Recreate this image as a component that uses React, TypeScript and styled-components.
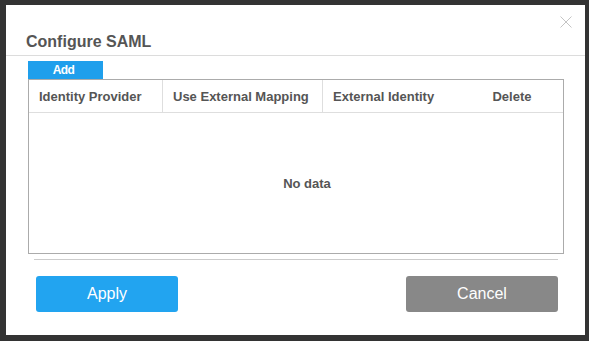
import React from "react"
import styled, { createGlobalStyle } from "styled-components"

const GlobalStyle = createGlobalStyle`
  html, body {
    margin: 0;
    padding: 0;
    background: #333333;
    font-family: "Liberation Sans", Arial, sans-serif;
  }
`

const columns = [
  { title: "Identity Provider", width: 134, align: "left" },
  { title: "Use External Mapping", width: 160, align: "left" },
  { title: "External Identity", width: 138, align: "left", noDivider: true },
  { title: "Delete", width: 102, align: "center", noDivider: true },
]

const App: React.FC = () => {
  return (
    <>
      <GlobalStyle />
      <Page>
        <Modal>
          <Header>
            <Title>Configure SAML</Title>
            <CloseButton aria-label="close">
              <svg width="12" height="12" viewBox="0 0 12 12">
                <path d="M0.5 0.5 L11.5 11.5 M11.5 0.5 L0.5 11.5" stroke="#c4c4c4" strokeWidth="1" fill="none" />
              </svg>
            </CloseButton>
          </Header>

          <Body>
            <AddButton>Add</AddButton>
            <Table>
              <HeadRow>
                {columns.map((col) => (
                  <HeadCell key={col.title} $width={col.width} $align={col.align} $divider={!col.noDivider}>
                    {col.title}
                  </HeadCell>
                ))}
              </HeadRow>
              <Empty>No data</Empty>
            </Table>
          </Body>

          <Footer>
            <ActionButton $variant="primary">Apply</ActionButton>
            <ActionButton $variant="secondary">Cancel</ActionButton>
          </Footer>
        </Modal>
      </Page>
    </>
  )
}

export default App


const Page = styled.div`
  box-sizing: border-box;
  width: 589px;
  height: 341px;
  padding: 5px 4px 6px 6px;
`

const Modal = styled.div`
  width: 579px;
  height: 330px;
  background: #ffffff;
  display: flex;
  flex-direction: column;
`

const Header = styled.div`
  box-sizing: border-box;
  height: 51px;
  border-bottom: 1px solid #dcdcdc;
  display: flex;
  align-items: flex-end;
  justify-content: space-between;
  padding: 0 13px 3px 20px;
  position: relative;
`

const Title = styled.h2`
  margin: 0;
  font-size: 16px;
  font-weight: bold;
  color: #555555;
  line-height: 20px;
`

const CloseButton = styled.span`
  position: absolute;
  top: 11px;
  right: 13px;
  width: 12px;
  height: 12px;
  display: flex;
`

const Body = styled.div`
  padding: 5px 21px 0 22px;
  display: flex;
  flex-direction: column;
  align-items: flex-start;
`

const AddButton = styled.div`
  box-sizing: border-box;
  width: 75px;
  height: 18px;
  padding-right: 4px;
  background: #1f9fec;
  color: #ffffff;
  font-size: 12px;
  font-weight: bold;
  letter-spacing: -0.6px;
  line-height: 18px;
  text-align: center;
`

const Table = styled.div`
  box-sizing: border-box;
  width: 536px;
  height: 175px;
  border: 1px solid #ababab;
  display: flex;
  flex-direction: column;
`

const HeadRow = styled.div`
  display: flex;
  height: 32px;
  border-bottom: 1px solid #dedede;
`

const HeadCell = styled.div<{ $width: number; $align: string; $divider: boolean }>`
  box-sizing: border-box;
  width: ${(p) => p.$width}px;
  flex: none;
  padding: 0 10px;
  border-right: ${(p) => (p.$divider ? "1px solid #dedede" : "none")};
  display: flex;
  align-items: center;
  justify-content: ${(p) => (p.$align === "center" ? "center" : "flex-start")};
  font-size: 13px;
  font-weight: bold;
  color: #555555;
  white-space: nowrap;
`

const Empty = styled.div`
  flex: 1;
  display: flex;
  align-items: center;
  justify-content: center;
  padding-left: 22px;
  font-size: 13px;
  font-weight: bold;
  color: #555555;
`

const Footer = styled.div`
  margin: 5px 27px 0 28px;
  padding: 16px 0 0 2px;
  border-top: 1px solid #cccccc;
  display: flex;
  justify-content: space-between;
`

const ActionButton = styled.div<{ $variant: "primary" | "secondary" }>`
  width: ${(p) => (p.$variant === "primary" ? 142 : 152)}px;
  height: 36px;
  border-radius: 3px;
  background: ${(p) => (p.$variant === "primary" ? "#22a4f0" : "#888888")};
  color: #ffffff;
  font-size: 16px;
  line-height: 36px;
  text-align: center;
`
